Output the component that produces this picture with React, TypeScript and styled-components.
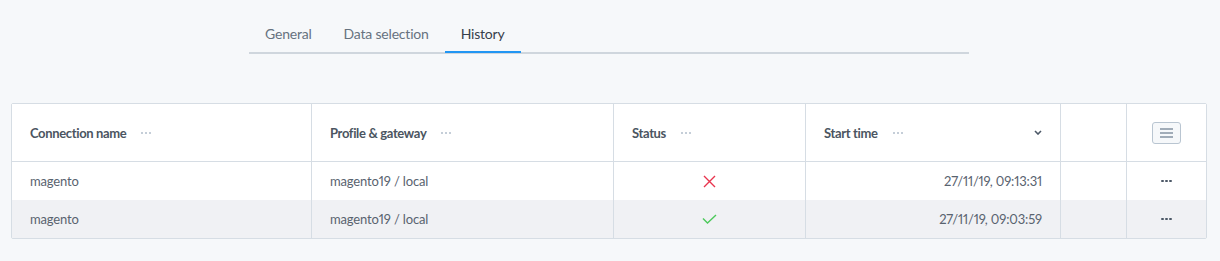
import React from 'react';
import styled, { createGlobalStyle } from 'styled-components';

const GlobalStyle = createGlobalStyle`
    body {
        margin: 0;
        background: #f6f8fa;
        font-family: Lato, 'Liberation Sans', sans-serif;
        font-variant-numeric: proportional-nums;
        -webkit-font-smoothing: antialiased;
    }
`;

const Page = styled.div`
    width: 1220px;
    height: 261px;
    overflow: hidden;
`;

const TabBar = styled.div`
    display: flex;
    width: 720px;
    margin: 16px 0 0 249px;
    border-bottom: 2px solid #cfd6dd;
`;

const Tab = styled.div<{ $active?: boolean }>`
    padding: 8px 16px;
    line-height: 20px;
    font-size: 14px;
    letter-spacing: -0.2px;
    color: ${(p) => (p.$active ? '#36404b' : '#66727f')};
    box-shadow: ${(p) => (p.$active ? 'inset 0 -2px 0 #2196f3' : 'none')};
    margin-bottom: ${(p) => (p.$active ? '-1px' : '0')};
    padding-bottom: ${(p) => (p.$active ? '9px' : '8px')};
`;

const Table = styled.div`
    margin: 49px 13px 0 11px;
    border: 1px solid #d6dde4;
    border-radius: 2px;
    background: #fff;
`;

const Row = styled.div<{ $header?: boolean; $alt?: boolean }>`
    display: grid;
    grid-template-columns: 299px 302px 192px 255px 66px 80px;
    height: ${(p) => (p.$header ? '57px' : '38px')};
    border-bottom: ${(p) => (p.$header ? '1px solid #d6dde4' : 'none')};
    background: ${(p) => (p.$alt ? '#f0f1f4' : '#fff')};
`;

const Cell = styled.div<{ $align?: 'left' | 'center' | 'right'; $first?: boolean }>`
    display: flex;
    align-items: center;
    justify-content: ${(p) =>
        p.$align === 'center' ? 'center' : p.$align === 'right' ? 'flex-end' : 'flex-start'};
    padding: 0 18px;
    border-left: ${(p) => (p.$first ? 'none' : '1px solid #d6dde4')};
    font-size: 13px;
    letter-spacing: -0.15px;
    color: #59636f;
    min-width: 0;
`;

const HeadTitle = styled.span`
    font-weight: 700;
    letter-spacing: -0.35px;
    color: #4b5561;
`;

const HeadDots = styled.span`
    display: inline-flex;
    gap: 2px;
    margin-left: 15px;
    & > i {
        width: 2px;
        height: 2px;
        background: #c5ced8;
    }
`;

const RowDots = styled.span`
    display: inline-flex;
    gap: 1.5px;
    & > i {
        width: 2.5px;
        height: 2.5px;
        border-radius: 1px;
        background: #4c5867;
    }
`;

const Spacer = styled.span`
    flex: 1;
`;

const MenuButton = styled.button`
    width: 29px;
    height: 22px;
    padding: 0;
    display: flex;
    align-items: center;
    justify-content: center;
    border: 1px solid #b9c5d1;
    border-radius: 3px;
    background: #f6f8fa;
`;

const Dots = ({ light }: { light?: boolean }) =>
    light ? (
        <HeadDots>
            <i />
            <i />
            <i />
        </HeadDots>
    ) : (
        <RowDots>
            <i />
            <i />
            <i />
        </RowDots>
    );

const Cross = () => (
    <svg width="13" height="13" viewBox="0 0 13 13">
        <path d="M1 1L12 12M12 1L1 12" stroke="#e8344e" strokeWidth="1.4" fill="none" />
    </svg>
);

const Check = () => (
    <svg width="15" height="10" viewBox="0 0 15 10">
        <path d="M1 4.5L5.5 9L14 1" stroke="#4cc95b" strokeWidth="1.4" fill="none" />
    </svg>
);

const Chevron = () => (
    <svg width="8" height="5" viewBox="0 0 8 5">
        <path d="M1 1L4 4L7 1" stroke="#4c5867" strokeWidth="1.6" fill="none" />
    </svg>
);

const Hamburger = () => (
    <svg width="13" height="10" viewBox="0 0 13 10">
        <path d="M0 1H13M0 5H13M0 9H13" stroke="#8593a3" strokeWidth="1.6" />
    </svg>
);

const rows = [
    { name: 'magento', profile: 'magento19 / local', ok: false, time: '27/11/19, 09:13:31' },
    { name: 'magento', profile: 'magento19 / local', ok: true, time: '27/11/19, 09:03:59' },
];

export default function App() {
    return (
        <Page>
            <GlobalStyle />
            <TabBar>
                <Tab>General</Tab>
                <Tab>Data selection</Tab>
                <Tab $active>History</Tab>
            </TabBar>
            <Table>
                <Row $header>
                    <Cell $first>
                        <HeadTitle>Connection name</HeadTitle>
                        <Dots light />
                    </Cell>
                    <Cell>
                        <HeadTitle>Profile &amp; gateway</HeadTitle>
                        <Dots light />
                    </Cell>
                    <Cell>
                        <HeadTitle>Status</HeadTitle>
                        <Dots light />
                    </Cell>
                    <Cell>
                        <HeadTitle>Start time</HeadTitle>
                        <Dots light />
                        <Spacer />
                        <Chevron />
                    </Cell>
                    <Cell />
                    <Cell $align="center">
                        <MenuButton>
                            <Hamburger />
                        </MenuButton>
                    </Cell>
                </Row>
                {rows.map((r, i) => (
                    <Row key={i} $alt={i % 2 === 1}>
                        <Cell $first>{r.name}</Cell>
                        <Cell>{r.profile}</Cell>
                        <Cell $align="center">{r.ok ? <Check /> : <Cross />}</Cell>
                        <Cell $align="right">{r.time}</Cell>
                        <Cell />
                        <Cell $align="center">
                            <Dots />
                        </Cell>
                    </Row>
                ))}
            </Table>
        </Page>
    );
}
